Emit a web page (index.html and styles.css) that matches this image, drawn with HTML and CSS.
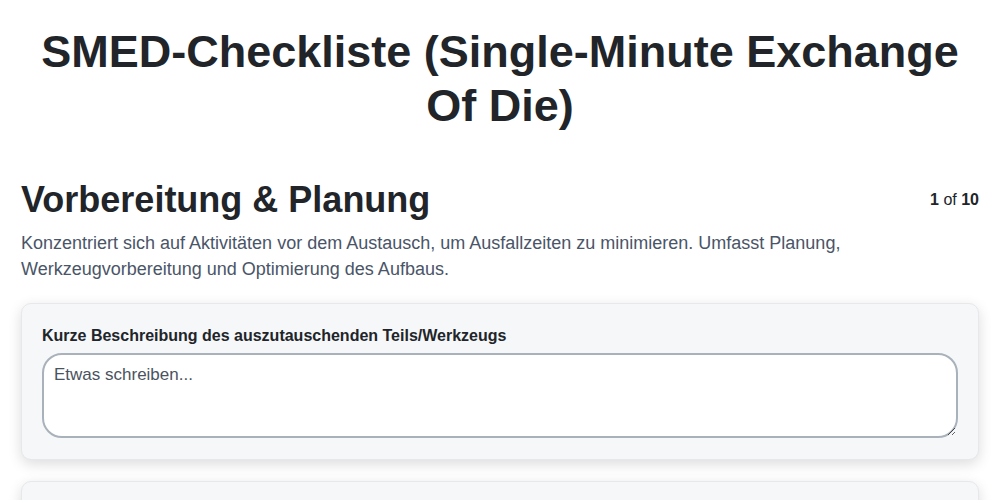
FILE: index.html
```html
<!DOCTYPE html>
<html lang="de">
<head>
    <meta charset="UTF-8">
    <meta name="viewport" content="width=device-width, initial-scale=1.0">
    <title>SMED-Checkliste</title>
    <link rel="stylesheet" href="styles.css">
</head>
<body>
    <div class="container">
        <h1>SMED-Checkliste (Single-Minute Exchange Of Die)</h1>

        <div class="section-head">
            <h2>Vorbereitung &amp; Planung</h2>
            <div class="step-count"><b>1</b> of <b>10</b></div>
        </div>
        <p class="section-desc">
            Konzentriert sich auf Aktivitäten vor dem Austausch, um Ausfallzeiten zu minimieren. Umfasst Planung, Werkzeugvorbereitung und Optimierung des Aufbaus.
        </p>

        <div class="question-card">
            <label for="q1">Kurze Beschreibung des auszutauschenden Teils/Werkzeugs</label>
            <textarea id="q1" placeholder="Etwas schreiben..."></textarea>
        </div>

        <div class="question-card">
            <label for="q2">Geplante Rüstzeit (Minuten)</label>
            <textarea id="q2" placeholder="Etwas schreiben..."></textarea>
        </div>
    </div>
</body>
</html>
```

FILE: styles.css
```css
body {
    margin: 0;
    font-family: 'Liberation Sans', Arial, sans-serif;
    color: #212529;
    background: #fff;
}

.container {
    padding: 25px 21px 20px 21px;
}

h1 {
    margin: 0 0 45px;
    font-size: 45px;
    line-height: 54px;
    text-align: center;
}

.section-head {
    display: flex;
    justify-content: space-between;
    align-items: center;
}

.section-head h2 {
    margin: 0;
    font-size: 36px;
    line-height: 43px;
}

.step-count {
    font-size: 16px;
}

.section-desc {
    margin: 9px 0 21px;
    font-size: 18px;
    line-height: 26px;
    color: #4a5568;
}

.question-card {
    background: #f6f7f9;
    border: 1px solid #e6e8eb;
    border-radius: 10px;
    padding: 20px 20px 21px;
    margin-bottom: 21px;
    box-shadow: 0 4px 14px rgba(0, 0, 0, 0.14);
}

.question-card label {
    display: block;
    font-weight: bold;
    font-size: 16px;
    line-height: 24px;
    margin-bottom: 5px;
}

.question-card textarea {
    display: block;
    box-sizing: border-box;
    width: 100%;
    height: 85px;
    padding: 10px;
    border: 2px solid #a9b1bb;
    border-radius: 20px;
    background: #fff;
    font-family: inherit;
    font-size: 17px;
    line-height: 20px;
    color: #212529;
}

.question-card textarea::placeholder {
    color: #4a5360;
}
```
